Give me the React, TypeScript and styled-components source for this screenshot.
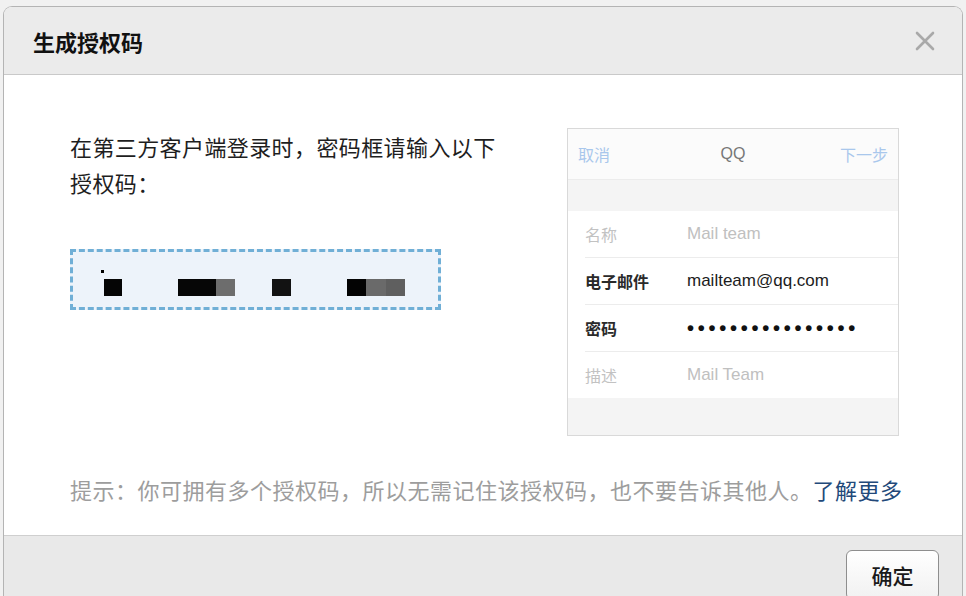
import React from "react";
import styled, { createGlobalStyle } from "styled-components";

const GlobalStyle = createGlobalStyle`
  html, body {
    margin: 0;
    padding: 0;
    background: #f1f1f1;
    overflow: hidden;
  }
  body {
    font-family: "Noto Sans CJK SC", "Liberation Sans", sans-serif;
  }
`;

const cjk = `"Noto Sans CJK SC", "Liberation Sans", sans-serif`;
const latin = `"Liberation Sans", "Noto Sans CJK SC", sans-serif`;

const Page = styled.div`
  padding: 6px 3px 0 3px;
  height: 596px;
  box-sizing: border-box;
`;

const Dialog = styled.div`
  width: 960px;
  height: 590px;
  border: 1px solid #b4b4b4;
  border-bottom: none;
  border-radius: 9px 9px 0 0;
  background: #fff;
  box-sizing: border-box;
  overflow: hidden;
  display: flex;
  flex-direction: column;
`;

const Header = styled.div`
  height: 67px;
  background: #ebebeb;
  border-bottom: 1px solid #c9c9c9;
  display: flex;
  align-items: center;
  justify-content: space-between;
  padding: 0 27px 0 29px;
  flex-shrink: 0;
`;

const Title = styled.h1`
  margin: 0;
  font-family: ${cjk};
  font-size: 22px;
  font-weight: 700;
  color: #111;
`;

const Close = styled.button`
  border: none;
  background: none;
  padding: 0;
  width: 20px;
  height: 20px;
  cursor: pointer;
  display: flex;
`;

const Body = styled.div`
  height: 460px;
  padding: 53px 63px 0 66px;
  box-sizing: border-box;
  flex-shrink: 0;
`;

const Main = styled.div`
  display: flex;
  justify-content: space-between;
`;

const Left = styled.div`
  width: 440px;
`;

const Intro = styled.p`
  margin: 0;
  font-family: ${cjk};
  font-size: 22px;
  line-height: 36px;
  color: #1e1e1e;
  letter-spacing: 0.4px;
`;

const CodeBox = styled.div`
  margin-top: 49px;
  width: 371px;
  height: 61px;
  box-sizing: border-box;
  border: 3px dashed #70afd6;
  background: #edf3fa;
  display: flex;
  align-items: center;
  padding-left: 31px;
  position: relative;
`;

const Mask = styled.span<{ $w: number; $gap: number }>`
  display: flex;
  height: 17px;
  width: ${(p) => p.$w}px;
  margin-left: ${(p) => p.$gap}px;
  margin-top: 16px;
`;

const MaskPart = styled.span<{ $tone: string }>`
  flex: 1;
  background: ${(p) => p.$tone};
`;

const Speck = styled.span`
  position: absolute;
  left: 28px;
  top: 18px;
  width: 3px;
  height: 3px;
  background: #000;
`;

const Phone = styled.div`
  width: 330px;
  border: 1px solid #d9d9d9;
  background: #f4f4f4;
  font-family: ${latin};
`;

const PhoneBar = styled.div`
  height: 50px;
  background: #fbfbfb;
  border-bottom: 1px solid #ececec;
  display: grid;
  grid-template-columns: 1fr auto 1fr;
  align-items: center;
  padding: 0 10px;
`;

const BarLink = styled.span<{ $right?: boolean }>`
  font-family: ${cjk};
  font-size: 16px;
  color: #a9c7ec;
  text-align: ${(p) => (p.$right ? "right" : "left")};
`;

const BarTitle = styled.span`
  font-size: 16px;
  color: #777;
`;

const Gap = styled.div<{ $h: number }>`
  height: ${(p) => p.$h}px;
`;

const Rows = styled.div`
  background: #fff;
  padding-left: 17px;
`;

const Row = styled.div<{ $last?: boolean }>`
  height: 46px;
  display: flex;
  align-items: center;
  border-bottom: ${(p) => (p.$last ? "none" : "1px solid #ececec")};
`;

const Label = styled.span<{ $dim?: boolean }>`
  width: 102px;
  font-family: ${cjk};
  font-size: 16px;
  color: ${(p) => (p.$dim ? "#c2c2c2" : "#2a2a2a")};
  font-weight: ${(p) => (p.$dim ? 400 : 700)};
`;

const Value = styled.span<{ $dim?: boolean }>`
  font-size: 17px;
  color: ${(p) => (p.$dim ? "#c0c0c0" : "#1c1c1c")};
`;

const Dots = styled.span`
  font-size: 20px;
  font-weight: 700;
  letter-spacing: 3.75px;
  color: #111;
`;

const Tip = styled.p`
  margin: 38px 0 0 0;
  font-family: ${cjk};
  font-size: 22px;
  line-height: 30px;
  letter-spacing: 0.5px;
  color: #9d9d9d;
  white-space: nowrap;
`;

const More = styled.a`
  color: #22497a;
  text-decoration: none;
  cursor: pointer;
`;

const Footer = styled.div`
  flex: 1;
  background: #e9e9e9;
  border-top: 1px solid #cfcfcf;
  display: flex;
  justify-content: flex-end;
  align-items: flex-start;
  padding: 14px 23px 0 0;
  overflow: hidden;
`;

const OkButton = styled.button`
  width: 93px;
  height: 50px;
  flex-shrink: 0;
  border: 1px solid #8e8e8e;
  border-radius: 6px;
  background: linear-gradient(#ffffff, #f1f1f1);
  font-family: ${cjk};
  font-size: 21px;
  font-weight: 500;
  color: #1a1a1a;
  padding: 0;
  cursor: pointer;
`;

const masks: { w: number; gap: number; tones: string[] }[] = [
  { w: 18, gap: 0, tones: ["#050505"] },
  { w: 57, gap: 56, tones: ["#060606", "#060606", "#6d6d6d"] },
  { w: 19, gap: 37, tones: ["#121212"] },
  { w: 58, gap: 56, tones: ["#030303", "#6a6a6a", "#5f5f5f"] },
];

const App = () => {
  return (
    <>
      <GlobalStyle />
      <Page>
        <Dialog>
          <Header>
            <Title>生成授权码</Title>
            <Close aria-label="关闭">
              <svg width="20" height="20" viewBox="0 0 20 20">
                <path d="M2 2 L18 18 M18 2 L2 18" stroke="#a9a9a9" strokeWidth="2.6" strokeLinecap="round" />
              </svg>
            </Close>
          </Header>
          <Body>
            <Main>
              <Left>
                <Intro>
                  在第三方客户端登录时，密码框请输入以下
                  <br />
                  授权码：
                </Intro>
                <CodeBox>
                  <Speck />
                  {masks.map((m, i) => (
                    <Mask key={i} $w={m.w} $gap={m.gap}>
                      {m.tones.map((t, j) => (
                        <MaskPart key={j} $tone={t} />
                      ))}
                    </Mask>
                  ))}
                </CodeBox>
              </Left>
              <Phone>
                <PhoneBar>
                  <BarLink>取消</BarLink>
                  <BarTitle>QQ</BarTitle>
                  <BarLink $right>下一步</BarLink>
                </PhoneBar>
                <Gap $h={31} />
                <Rows>
                  <Row>
                    <Label $dim>名称</Label>
                    <Value $dim>Mail team</Value>
                  </Row>
                  <Row>
                    <Label>电子邮件</Label>
                    <Value>mailteam@qq.com</Value>
                  </Row>
                  <Row>
                    <Label>密码</Label>
                    <Dots>••••••••••••••••</Dots>
                  </Row>
                  <Row $last>
                    <Label $dim>描述</Label>
                    <Value $dim>Mail Team</Value>
                  </Row>
                </Rows>
                <Gap $h={37} />
              </Phone>
            </Main>
            <Tip>
              提示：你可拥有多个授权码，所以无需记住该授权码，也不要告诉其他人。<More>了解更多</More>
            </Tip>
          </Body>
          <Footer>
            <OkButton>确定</OkButton>
          </Footer>
        </Dialog>
      </Page>
    </>
  );
};

export default App;
